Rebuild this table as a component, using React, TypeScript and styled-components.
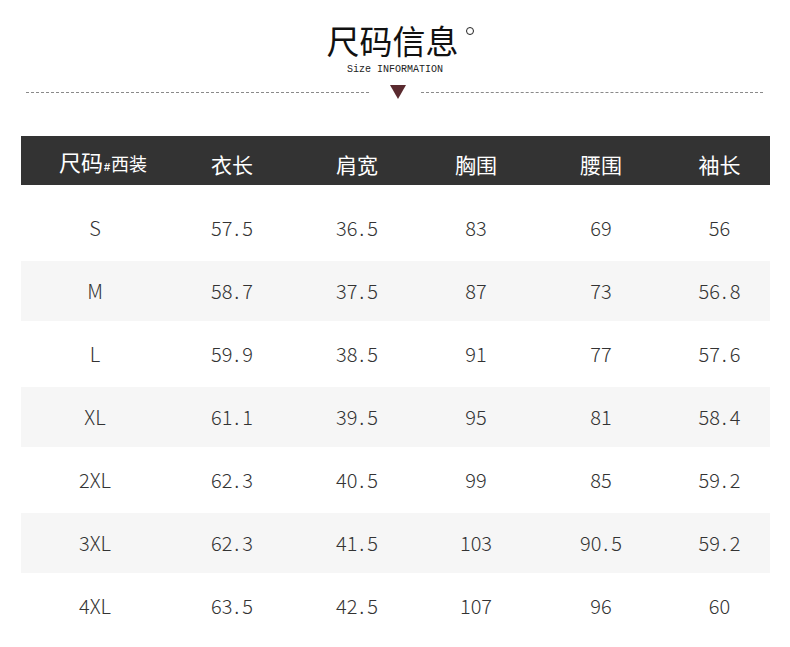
import React from "react";
import styled, { createGlobalStyle } from "styled-components";

const GlobalStyle = createGlobalStyle`
  html, body { margin: 0; padding: 0; background: #ffffff; }
  body { font-family: "Noto Sans CJK SC", "Noto Sans", sans-serif; }
`;

const Page = styled.div`
  width: 790px;
  min-height: 647px;
  box-sizing: border-box;
  padding-top: 20px;
  background: #fff;
`;

const Heading = styled.header`
  display: flex;
  flex-direction: column;
  align-items: center;
`;

const Title = styled.h1`
  margin: 0;
  margin-left: 10px;
  font-family: "Noto Sans CJK SC", sans-serif;
  font-weight: 400;
  font-size: 33px;
  line-height: 40px;
  color: #111;
  display: flex;
  align-items: flex-start;
`;

const Degree = styled.span`
  display: inline-block;
  width: 6px;
  height: 6px;
  border: 1.2px solid #222;
  border-radius: 50%;
  margin-left: 7px;
  margin-top: 7px;
`;

const Subtitle = styled.div`
  margin-top: 4px;
  font-family: "Liberation Mono", monospace;
  font-size: 10px;
  line-height: 12px;
  color: #222;
`;

const Divider = styled.div`
  margin-top: 9px;
  display: flex;
  align-items: center;
  height: 14px;
  padding: 0 27px 0 26px;
`;

const Line = styled.div`
  flex: 1;
  height: 0;
  border-top: 1px dashed #8a8a8a;
`;

const Triangle = styled.div<{ $color: string }>`
  width: 0;
  height: 0;
  border-left: 8px solid transparent;
  border-right: 8px solid transparent;
  border-top: 14px solid ${(p) => p.$color};
  margin: 0 15px 0 21px;
`;

const Table = styled.div`
  margin: 37px 20px 0 21px;
  display: flex;
  flex-direction: column;
`;

const cols = "148px 126px 124px 114px 136px 101px";

const HeaderRow = styled.div`
  display: grid;
  grid-template-columns: ${cols};
  height: 49px;
  background: #333333;
  color: #fff;
  align-items: center;
`;

const HeadCell = styled.div<{ $first?: boolean }>`
  text-align: center;
  font-family: "Noto Sans CJK SC", sans-serif;
  font-size: 21px;
  line-height: 24px;
  padding-top: 6px;
  padding-left: ${(p) => (p.$first ? "16px" : "0")};
  white-space: nowrap;
`;

const Big = styled.span`
  font-size: 22px;
`;

const Small = styled.span`
  font-size: 18px;
`;

const Hash = styled.span`
  font-size: 11px;
  font-weight: 700;
  font-family: "Liberation Sans", sans-serif;
  margin: 0 1px;
`;

const Body = styled.div`
  margin-top: 13px;
  display: flex;
  flex-direction: column;
  gap: 3px;
`;

const Row = styled.div<{ $shade: boolean }>`
  display: grid;
  grid-template-columns: ${cols};
  height: 60px;
  align-items: center;
  background: ${(p) => (p.$shade ? "#f6f6f6" : "transparent")};
`;

const Cell = styled.div`
  text-align: center;
  font-family: "Noto Sans CJK SC", sans-serif;
  font-weight: 300;
  font-size: 20px;
  line-height: 24px;
  color: #333;
  white-space: nowrap;
`;

const Dot = styled.span`
  margin: 0 3px 0 2px;
`;

const headers = ["衣长", "肩宽", "胸围", "腰围", "袖长"];

const rows: string[][] = [
  ["S", "57.5", "36.5", "83", "69", "56"],
  ["M", "58.7", "37.5", "87", "73", "56.8"],
  ["L", "59.9", "38.5", "91", "77", "57.6"],
  ["XL", "61.1", "39.5", "95", "81", "58.4"],
  ["2XL", "62.3", "40.5", "99", "85", "59.2"],
  ["3XL", "62.3", "41.5", "103", "90.5", "59.2"],
  ["4XL", "63.5", "42.5", "107", "96", "60"],
];

function Value({ v }: { v: string }) {
  const i = v.indexOf(".");
  if (i < 0) return <>{v}</>;
  return (
    <>
      {v.slice(0, i)}
      <Dot>.</Dot>
      {v.slice(i + 1)}
    </>
  );
}

export default function App() {
  return (
    <Page>
      <GlobalStyle />
      <Heading>
        <Title>
          尺码信息
          <Degree />
        </Title>
        <Subtitle>Size INFORMATION</Subtitle>
      </Heading>
      <Divider>
        <Line />
        <Triangle $color="#5a2a2f" />
        <Line />
      </Divider>
      <Table>
        <HeaderRow>
          <HeadCell $first>
            <Big>尺码</Big>
            <Hash>#</Hash>
            <Small>西装</Small>
          </HeadCell>
          {headers.map((h) => (
            <HeadCell key={h}>{h}</HeadCell>
          ))}
        </HeaderRow>
        <Body>
          {rows.map((r, idx) => (
            <Row key={r[0]} $shade={idx % 2 === 1}>
              {r.map((c, j) => (
                <Cell key={j}>
                  <Value v={c} />
                </Cell>
              ))}
            </Row>
          ))}
        </Body>
      </Table>
    </Page>
  );
}
